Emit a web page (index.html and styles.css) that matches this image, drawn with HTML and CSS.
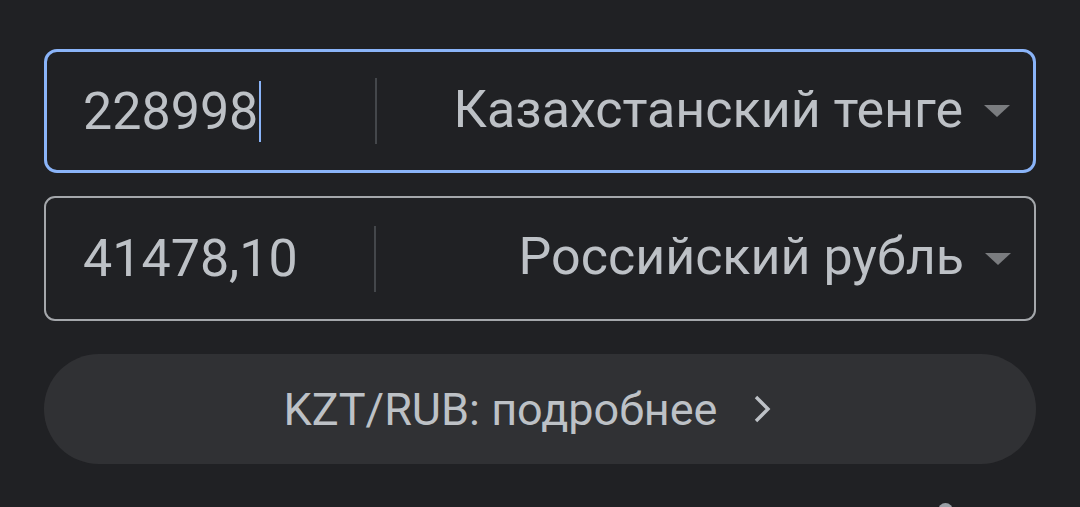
FILE: index.html
```html
<!DOCTYPE html>
<html lang="ru">
<head>
  <meta charset="UTF-8" />
  <meta name="viewport" content="width=device-width, initial-scale=1.0" />
  <title>Конвертер валют</title>
  <link rel="stylesheet" href="styles.css">
</head>
<body>
  <div class="converter">
    <div class="field active">
      <div class="amount">228998<span class="caret"></span></div>
      <div class="divider"></div>
      <div class="currency">Казахстанский тенге</div>
      <svg class="arrow" width="28" height="14" viewBox="0 0 28 14"><path d="M1 1 L27 1 L14 13 Z" fill="#7a7c7f"/></svg>
    </div>

    <div class="field">
      <div class="amount">41478,10</div>
      <div class="divider"></div>
      <div class="currency">Российский рубль</div>
      <svg class="arrow" width="28" height="14" viewBox="0 0 28 14"><path d="M1 1 L27 1 L14 13 Z" fill="#7a7c7f"/></svg>
    </div>

    <button class="details">
      <span>KZT/RUB: подробнее</span>
      <svg width="18" height="28" viewBox="0 0 18 28"><path d="M2 2 L14 14 L2 26" fill="none" stroke="#bdc1c6" stroke-width="3.4"/></svg>
    </button>

    <div class="more-row">
      <span class="dot"></span>
    </div>
  </div>
</body>
</html>
```

FILE: styles.css
```css
body {
  margin: 0;
  background: #202124;
  font-family: Roboto, "Noto Sans", sans-serif;
  color: #bdc1c6;
  overflow: hidden;
}
.converter {
  width: 992px;
  margin-left: 44px;
  padding-top: 49px;
}
.field {
  box-sizing: border-box;
  height: 125px;
  display: flex;
  align-items: center;
  border: 2px solid #a4a7ab;
  border-radius: 11px;
  margin-bottom: 23px;
}
.field.active {
  height: 124px;
  border: 3px solid #8ab4f8;
  border-radius: 13px;
}
.amount {
  width: 291px;
  padding-left: 37px;
  font-size: 52px;
  display: flex;
  align-items: center;
}
.field.active .amount {
  padding-left: 36px;
  width: 292px;
}
.caret {
  width: 2px;
  height: 61px;
  background: #8ab4f8;
  margin-left: 1px;
}
.divider {
  width: 2px;
  height: 66px;
  background: #44474b;
}
.currency {
  flex: 1;
  text-align: right;
  font-size: 52px;
  padding-right: 20px;
  margin-top: -4px;
}
.arrow {
  margin-right: 22px;
  filter: blur(0.6px);
}
.details {
  width: 100%;
  height: 110px;
  margin-top: 33px;
  border: none;
  border-radius: 55px;
  background: #303134;
  color: #bdc1c6;
  font-family: Roboto, "Noto Sans", sans-serif;
  font-size: 45px;
  display: flex;
  align-items: center;
  justify-content: center;
  gap: 37px;
  padding: 0 24px 0 0;
}
.more-row {
  display: flex;
  justify-content: flex-end;
  padding-right: 83px;
  margin-top: 39px;
}
.dot {
  width: 15px;
  height: 15px;
  border-radius: 50%;
  background: #9aa0a6;
}
```
